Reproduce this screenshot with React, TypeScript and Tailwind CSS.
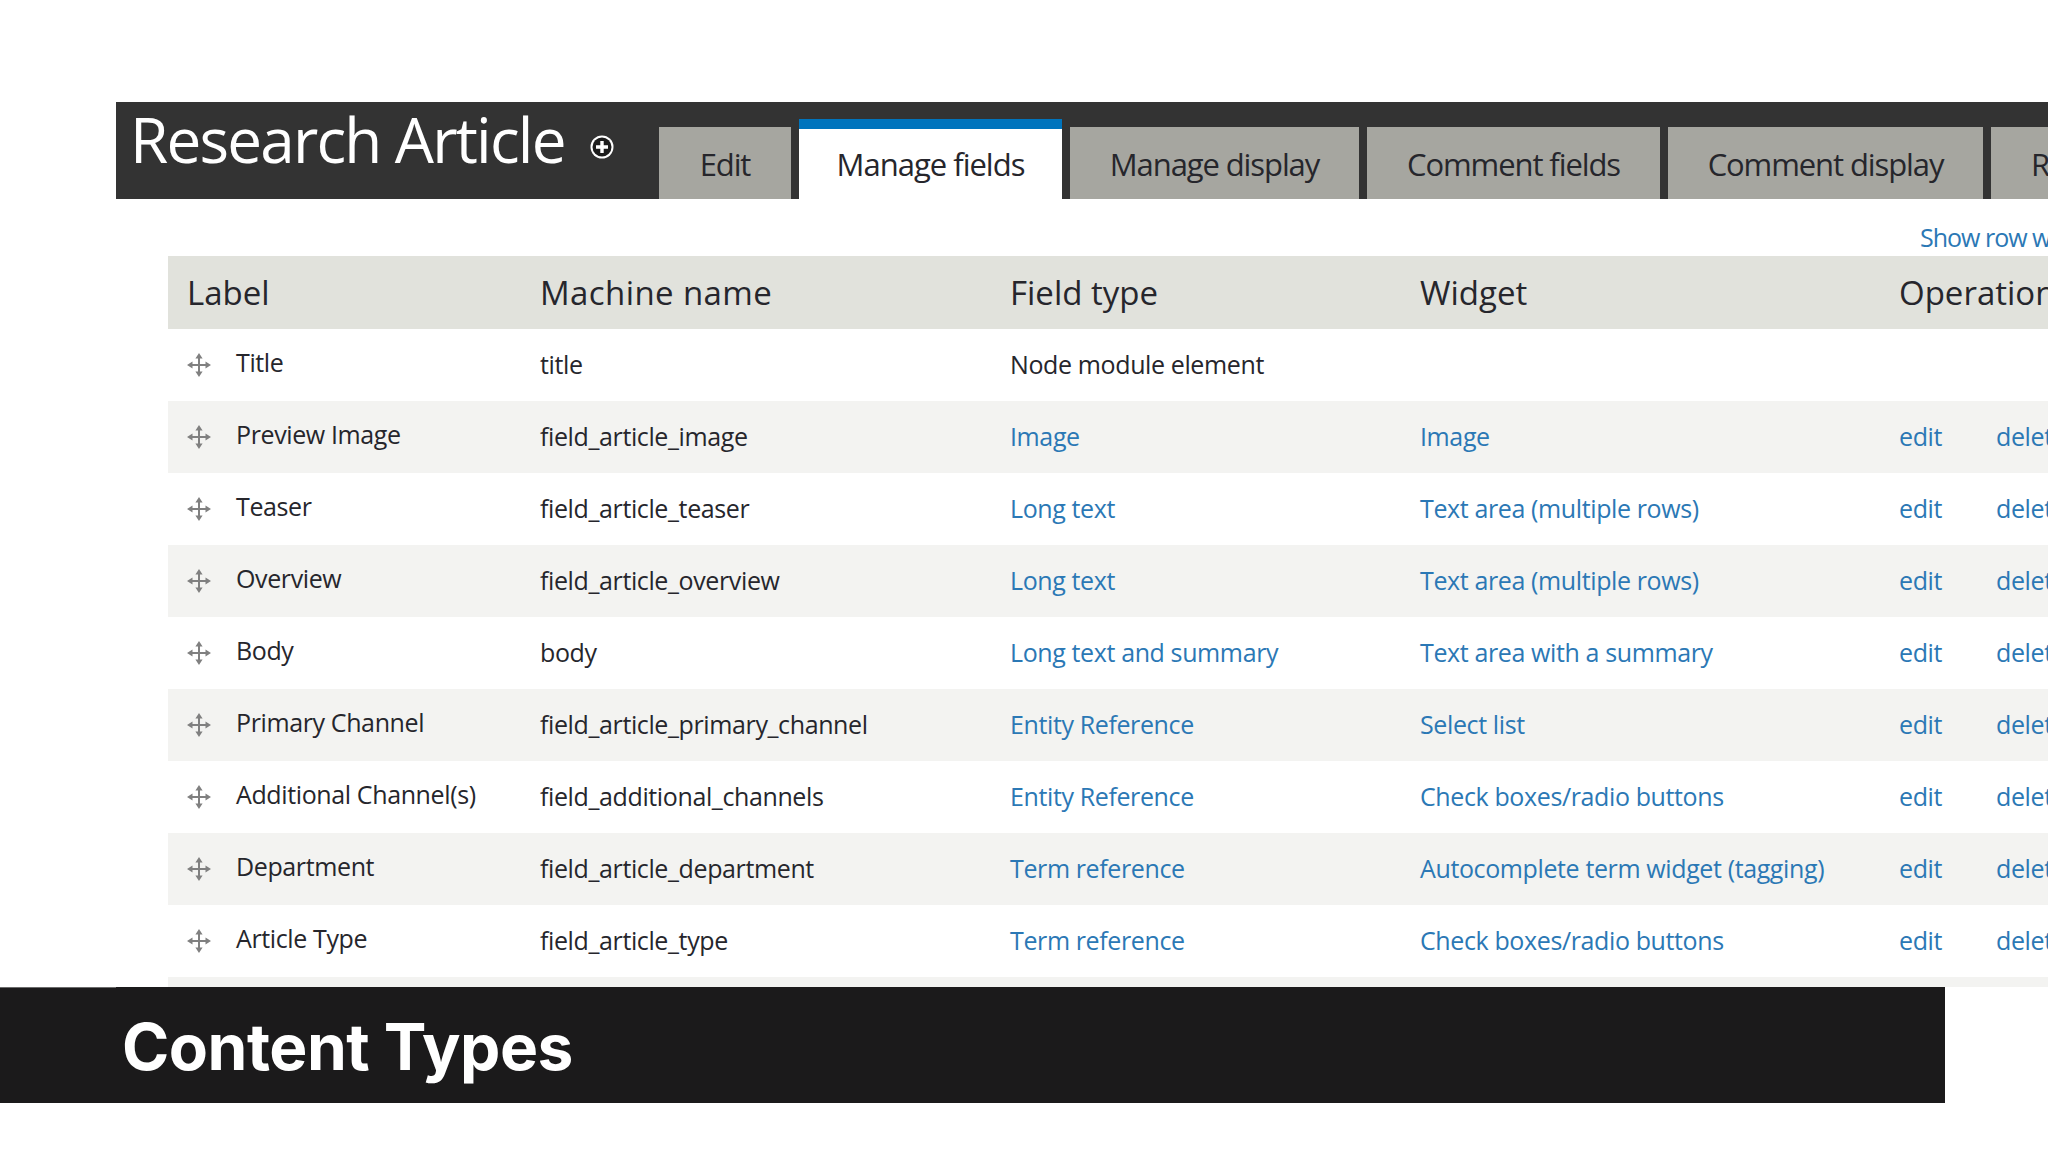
const tabs = [
  { label: 'Edit', width: 'w-[132px]' },
  { label: 'Manage fields', width: 'w-[263px]', active: true },
  { label: 'Manage display', width: 'w-[289px]' },
  { label: 'Comment fields', width: 'w-[293px]' },
  { label: 'Comment display', width: 'w-[315px]' },
]

const rows = [
  { label: 'Title', machine: 'title', type: 'Node module element', widget: '', ops: false },
  { label: 'Preview Image', machine: 'field_article_image', type: 'Image', widget: 'Image', ops: true },
  { label: 'Teaser', machine: 'field_article_teaser', type: 'Long text', widget: 'Text area (multiple rows)', ops: true },
  { label: 'Overview', machine: 'field_article_overview', type: 'Long text', widget: 'Text area (multiple rows)', ops: true },
  { label: 'Body', machine: 'body', type: 'Long text and summary', widget: 'Text area with a summary', ops: true },
  { label: 'Primary Channel', machine: 'field_article_primary_channel', type: 'Entity Reference', widget: 'Select list', ops: true },
  { label: 'Additional Channel(s)', machine: 'field_additional_channels', type: 'Entity Reference', widget: 'Check boxes/radio buttons', ops: true },
  { label: 'Department', machine: 'field_article_department', type: 'Term reference', widget: 'Autocomplete term widget (tagging)', ops: true },
  { label: 'Article Type', machine: 'field_article_type', type: 'Term reference', widget: 'Check boxes/radio buttons', ops: true },
]

const columns = 'grid grid-cols-[372px_470px_410px_479px_97px_200px] w-[2228px]'

function DragHandle() {
  return (
    <svg width="24" height="24" viewBox="0 0 24 24" className="shrink-0 text-[#808080]" fill="currentColor">
      <path d="M11 5h2v14h-2zM5 11h14v2H5z" />
      <path d="M12 0l3.600 5.500H8.400zM12 24l-3.600-5.500h7.200zM0 12l5.500-3.600v7.200zM24 12l-5.500 3.600V8.400z" />
    </svg>
  )
}

function AddIcon() {
  return (
    <svg width="24" height="24" viewBox="0 0 24 24" className="ml-[25px] mt-[16px] shrink-0">
      <circle cx="12" cy="12" r="11.500" fill="#ffffff" />
      <circle cx="12" cy="12" r="9.500" fill="#1c1c1c" />
      <path d="M10.300 6h3.400v4.300H18v3.400h-4.300V18h-3.400v-4.300H6v-3.400h4.300z" fill="#ffffff" />
    </svg>
  )
}

function Link({ children }: { children: string }) {
  return <span className="text-[#2b78b5]">{children}</span>
}

export default function App() {
  return (
    <div className="relative h-[1152px] w-[2048px] overflow-hidden bg-white font-['Open_Sans',sans-serif] text-[#26262c]">
      {/* Header with tabs */}
      <div className="ml-[116px] mt-[102px] flex h-[97px] w-[1932px] bg-[#333333]">
        <div className="flex w-[543px] shrink-0 items-center self-start pl-[14px] pt-[1px]">
          <h1 className="whitespace-nowrap text-[62px] font-normal leading-[72px] tracking-[-1.8px] text-white">
            Research Article
          </h1>
          <AddIcon />
        </div>
        <div className="flex items-end gap-2">
          {tabs.map((tab) => (
            <div
              key={tab.label}
              className={
                tab.active
                  ? `${tab.width} flex h-[80px] shrink-0 items-center justify-center whitespace-nowrap border-t-[10px] border-[#0074bd] bg-white text-[31px] tracking-[-1px] text-[#26262c]`
                  : `${tab.width} flex h-[72px] shrink-0 items-center justify-center whitespace-nowrap bg-[#a6a6a0] pt-[2px] text-[31px] tracking-[-1.1px] text-[#26262c]`
              }
            >
              {tab.label}
            </div>
          ))}
          <div className="flex h-[72px] w-[120px] shrink-0 items-center whitespace-nowrap bg-[#a6a6a0] pl-[40px] pt-[2px] text-[31px] tracking-[-1.1px]">
            Revisions
          </div>
        </div>
      </div>

      {/* Row weights toggle */}
      <div className="flex h-[57px] items-end pb-[2px] pl-[1920px] text-[25px] leading-[34px] tracking-[-1px] whitespace-nowrap">
        <Link>Show row weights</Link>
      </div>

      {/* Fields table */}
      <div className="ml-[168px]">
        <div className={`${columns} h-[73px] items-center bg-[#e1e2dc] text-[33px]`}>
          <div className="pl-[19px]">Label</div>
          <div className="tracking-[0.4px]">Machine name</div>
          <div>Field type</div>
          <div>Widget</div>
          <div className="whitespace-nowrap">Operations</div>
        </div>
        {rows.map((row, i) => (
          <div
            key={row.label}
            className={`${columns} h-[72px] items-center whitespace-nowrap text-[25px] tracking-[-0.38px] ${i % 2 === 1 ? 'bg-[#f3f3f1]' : 'bg-white'}`}
          >
            <div className="flex items-center pl-[19px]">
              <DragHandle />
              <span className="ml-[25px] -translate-y-[2px]">{row.label}</span>
            </div>
            <div>{row.machine}</div>
            <div>{row.ops ? <Link>{row.type}</Link> : row.type}</div>
            <div>{row.widget && <Link>{row.widget}</Link>}</div>
            <div>{row.ops && <Link>edit</Link>}</div>
            <div>{row.ops && <Link>delete</Link>}</div>
          </div>
        ))}
        <div className="h-[10px] w-[1880px] bg-[#f3f3f1]" />
      </div>

      {/* Caption bar */}
      <div className="relative flex h-[116px] w-[1945px] items-center bg-[#1b1a1b] pl-[122px] pt-[3px]">
        <div className="absolute left-0 top-0 h-px w-[116px] bg-[#6b6b6b]" />
        <span className="font-['Inter',sans-serif] text-[64px] font-bold tracking-[-0.5px] text-white">
          Content Types
        </span>
      </div>
    </div>
  )
}
